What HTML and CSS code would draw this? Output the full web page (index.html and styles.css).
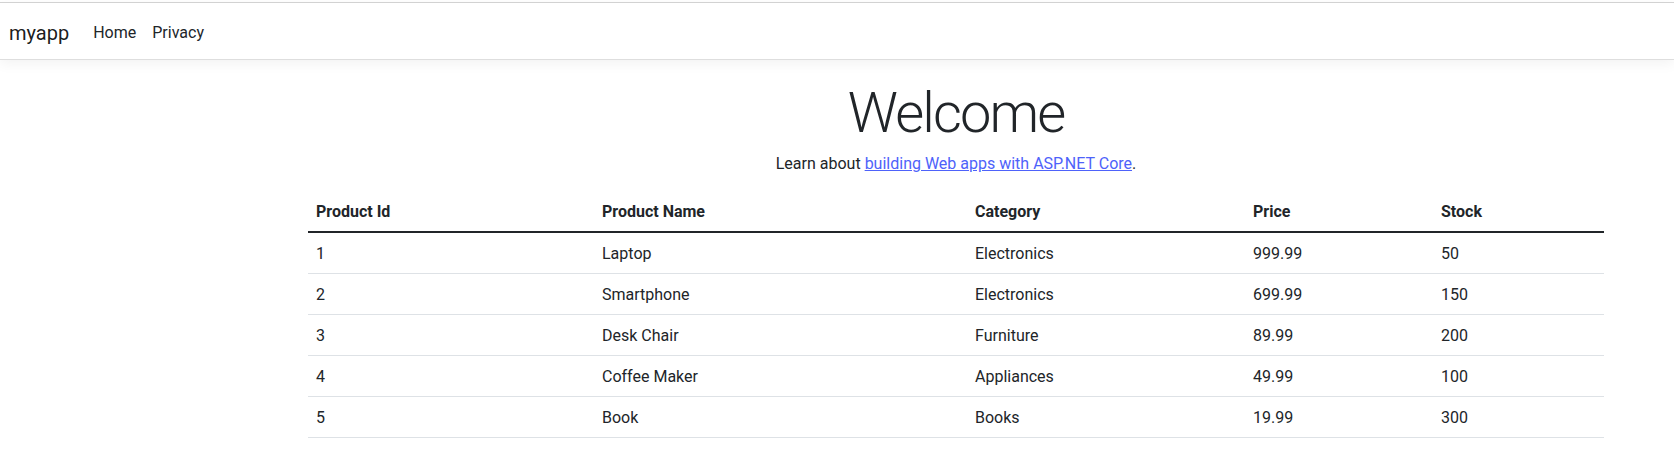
FILE: index.html
```html
<!DOCTYPE html>
<html lang="en">
<head>
<meta charset="utf-8">
<title>Home Page - myapp</title>
<link rel="stylesheet" href="styles.css">
</head>
<body>
<header class="site-header">
  <nav class="navbar">
    <div class="navbar-inner">
      <a class="navbar-brand" href="#">myapp</a>
      <ul class="navbar-nav">
        <li><a class="nav-link" href="#">Home</a></li>
        <li><a class="nav-link" href="#">Privacy</a></li>
      </ul>
    </div>
  </nav>
</header>
<main class="container">
  <div class="intro">
    <h1 class="display-4">Welcome</h1>
    <p class="lead-text">Learn about <a class="doc-link" href="#">building Web apps with ASP.NET Core</a>.</p>
  </div>
  <table class="table">
    <colgroup>
      <col class="col-id">
      <col class="col-name">
      <col class="col-cat">
      <col class="col-price">
      <col class="col-stock">
    </colgroup>
    <thead>
      <tr><th>Product Id</th><th>Product Name</th><th>Category</th><th>Price</th><th>Stock</th></tr>
    </thead>
    <tbody>
      <tr><td>1</td><td>Laptop</td><td>Electronics</td><td>999.99</td><td>50</td></tr>
      <tr><td>2</td><td>Smartphone</td><td>Electronics</td><td>699.99</td><td>150</td></tr>
      <tr><td>3</td><td>Desk Chair</td><td>Furniture</td><td>89.99</td><td>200</td></tr>
      <tr><td>4</td><td>Coffee Maker</td><td>Appliances</td><td>49.99</td><td>100</td></tr>
      <tr><td>5</td><td>Book</td><td>Books</td><td>19.99</td><td>300</td></tr>
    </tbody>
  </table>
</main>
</body>
</html>
```
FILE: styles.css
```css
* { box-sizing: border-box; }

html, body {
  margin: 0;
  padding: 0;
  background: #fff;
}

body {
  font-family: "Segoe UI", Roboto, "Liberation Sans", sans-serif;
  font-size: 16px;
  line-height: 1.5;
  color: #212529;
}

.site-header {
  padding-top: 2px;
}

.navbar {
  border-top: 1px solid #d2d2d2;
  border-bottom: 1px solid #dedede;
  box-shadow: 0 4px 12px rgba(0, 0, 0, 0.05);
  padding: 10px 0 6px;
  background: #fff;
  margin-bottom: 16px;
}

.navbar-inner {
  display: flex;
  align-items: center;
  padding: 0 9px;
}

.navbar-brand {
  font-size: 20px;
  line-height: 30px;
  padding: 5px 0;
  margin-right: 16px;
  color: rgba(0, 0, 0, 0.9);
  text-decoration: none;
}

.navbar-nav {
  display: flex;
  list-style: none;
  margin: 0;
  padding: 0;
}

.nav-link {
  display: block;
  padding: 8px;
  line-height: 24px;
  color: #212529;
  text-decoration: none;
}

.container {
  width: 1320px;
  margin-left: 296px;
  padding: 0 12px;
}

.intro {
  text-align: center;
}

.display-4 {
  font-size: 56px;
  font-weight: 300;
  line-height: 67px;
  letter-spacing: -1.9px;
  padding-top: 4px;
  margin: 0 0 4px;
  color: #212529;
}

.lead-text {
  margin: 0 0 16px;
  padding-top: 1px;
  line-height: 23px;
}

.doc-link {
  color: #4e62fa;
  text-decoration: underline;
}

.table {
  width: 100%;
  border-collapse: collapse;
  table-layout: fixed;
  margin-bottom: 16px;
}

.col-id { width: 286px; }
.col-name { width: 373px; }
.col-cat { width: 278px; }
.col-price { width: 188px; }
.col-stock { width: 171px; }

.table th,
.table td {
  text-align: left;
  padding: 9px 8px 7px;
  line-height: 24px;
  border-bottom: 1px solid #dee2e6;
  vertical-align: top;
}

.table th {
  font-weight: 700;
  border-bottom: 2px solid #212529;
}
```
